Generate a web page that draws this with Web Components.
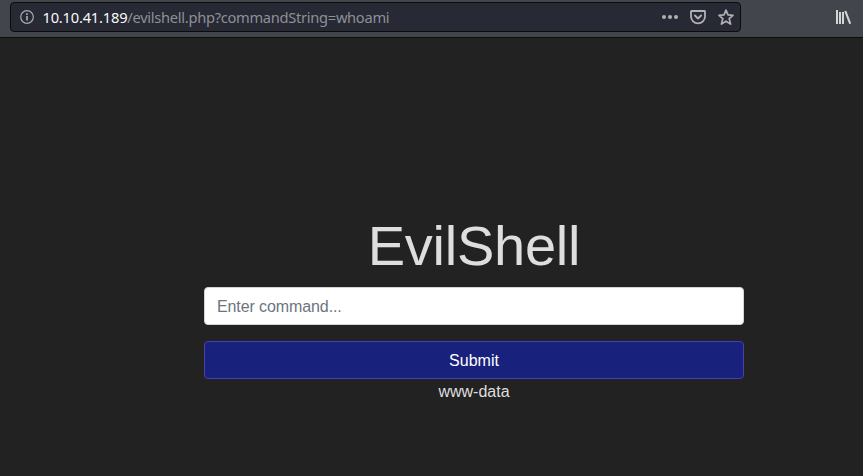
<!DOCTYPE html>
<html lang="en">
<head>
<meta charset="utf-8">
<title>EvilShell</title>
<style>
html, body { margin: 0; height: 100%; overflow: hidden; background: #222; }
body { display: flex; flex-direction: column; font-family: "Liberation Sans", Arial, sans-serif; }
</style>
</head>
<body>
<browser-bar>
  <url-field><span slot="host">10.10.41.189</span><span slot="path">/evilshell.php?commandString=whoami</span></url-field>
</browser-bar>
<shell-page>
  <span slot="title">EvilShell</span>
  <command-input slot="form" placeholder="Enter command..."></command-input>
  <submit-button slot="form">Submit</submit-button>
  <span slot="output">www-data</span>
</shell-page>
<script>
function define(name, html) {
  customElements.define(name, class extends HTMLElement {
    constructor() {
      super();
      this.attachShadow({ mode: "open" }).innerHTML = html;
    }
    connectedCallback() {
      const input = this.shadowRoot.querySelector("input");
      if (input) input.placeholder = this.getAttribute("placeholder") || "";
    }
  });
}

define("browser-bar", `
<style>
:host { display: flex; justify-content: space-between; align-items: flex-start; box-sizing: border-box; flex: none;
  height: 38px; padding: 2px 11px 0 10px; background: #42454c; border-bottom: 1px solid #0c0c0d; }
svg { display: block; margin-top: 7px; }
</style>
<slot></slot>
<svg width="17" height="16" viewBox="0 0 17 16" fill="#d4d4d5">
  <path d="M1 1h2v14H1zM4 3h2v12H4zM7 3h2v12H7zM9.300 2.300l2-.6L16.200 14.400l-2 .6z"/>
</svg>`);

define("url-field", `
<style>
:host { display: flex; align-items: center; box-sizing: border-box; width: 731px; height: 30px; padding: 0 6px 0 9px;
  background: #272934; border: 1px solid #0c0c0d; border-radius: 4px;
  font: 14.67px/20px "Noto Sans", sans-serif; color: #8f9096; }
.url { flex: 1; margin-left: 8.5px; white-space: nowrap; letter-spacing: -0.29px; }
.host { color: #f9f9fa; letter-spacing: -0.2px; }
.actions { display: flex; gap: 12px; }
svg { display: block; flex: none; }
</style>
<svg width="14" height="16" viewBox="0 0 14 16" fill="none" stroke="#a9aaaf">
  <circle cx="7" cy="8" r="6.3" stroke-width="1.2"/>
  <path d="M7 7v4.5M7 4.3v1.7" stroke-width="1.7"/>
</svg>
<div class="url"><span class="host"><slot name="host"></slot></span><slot name="path"></slot></div>
<div class="actions">
  <svg width="16" height="16" viewBox="0 0 16 16" fill="#b1b1b3">
    <circle cx="2" cy="8" r="2"/><circle cx="8" cy="8" r="2"/><circle cx="14" cy="8" r="2"/>
  </svg>
  <svg width="16" height="16" viewBox="0 0 16 16" fill="none" stroke="#b1b1b3" stroke-width="1.8" stroke-linecap="round" stroke-linejoin="round">
    <path d="M1.500 2h13a.5.5 0 0 1 .5.5V7.500a7 6.800 0 0 1-14 0V2.500a.5.5 0 0 1 .5-.5z"/><path d="M4.900 6.500L8 9.500l3.100-3"/>
  </svg>
  <svg width="16" height="16" viewBox="0 0 16 16" fill="none" stroke="#b1b1b3" stroke-width="1.7" stroke-linejoin="round">
    <path d="M8 1.1l2 4.800 5 .4-3.800 3.300 1.400 5.500L8 12.200l-4.600 2.900 1.400-5.500L1 6.300l5-.4z"/>
  </svg>
</div>`);

define("shell-page", `
<style>
:host { display: flex; flex-direction: column; align-items: center; box-sizing: border-box; flex: 1;
  width: 540px; margin-left: 204px; padding-top: 174px; color: #dedede; font-size: 16px; line-height: 24px; }
h1 { margin: 0 0 8px; font-size: 56px; font-weight: 400; line-height: 67px; letter-spacing: -0.25px; }
.form { display: flex; flex-direction: column; gap: 16px; width: 100%; }
.output { padding-top: 1px; }
</style>
<h1><slot name="title"></slot></h1>
<div class="form"><slot name="form"></slot></div>
<div class="output"><slot name="output"></slot></div>`);

define("command-input", `
<style>
:host { display: block; }
input { display: block; box-sizing: border-box; width: 100%; height: 38px; margin: 0; padding: 7px 12px 5px;
  background: #fff; border: 1px solid #ced4da; border-radius: 4px; font: inherit; letter-spacing: -0.1px; color: #495057; }
input::placeholder { color: #6c757d; opacity: 1; }
</style>
<input type="text">`);

define("submit-button", `
<style>
:host { display: block; }
button { display: block; box-sizing: border-box; width: 100%; height: 38px; margin: 0; padding: 7px 12px 5px;
  background: #18217b; border: 1px solid #4a40a8; border-radius: 4px; font: inherit; line-height: 24px; color: #fff; }
</style>
<button type="button"><slot></slot></button>`);
</script>
</body>
</html>
